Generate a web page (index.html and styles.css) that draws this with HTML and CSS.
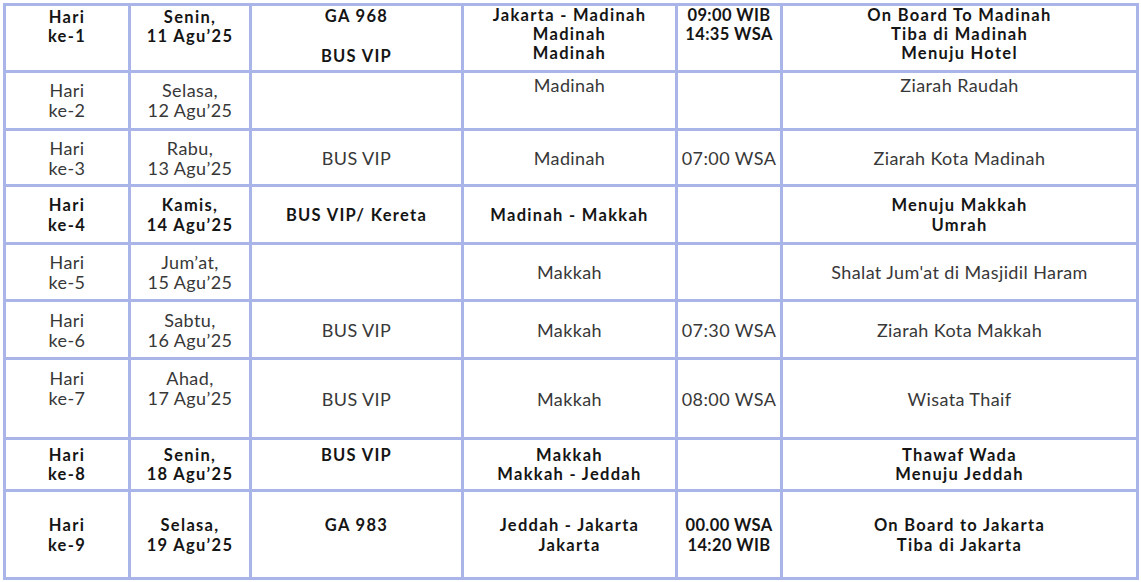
FILE: index.html
```html
<!DOCTYPE html>
<html lang="id">
<head>
<meta charset="utf-8">
<title>Jadwal Perjalanan Umrah</title>
<link rel="stylesheet" href="styles.css">
</head>
<body>
<div class="sched">
  <!-- Row 1 -->
  <div class="c b lh19 top p2">Hari<br>ke-1</div>
  <div class="c b lh19 top p2">Senin,<br>11 Agu’25</div>
  <div class="c b lh19 top p1"><span>GA 968</span><span class="gap">BUS VIP</span></div>
  <div class="c b lh19 top p0">Jakarta - Madinah<br>Madinah<br>Madinah</div>
  <div class="c b lh19 top p0 tight">09:00 WIB<br>14:35 WSA</div>
  <div class="c b lh19 top p0">On Board To Madinah<br>Tiba di Madinah<br>Menuju Hotel</div>
  <!-- Row 2 -->
  <div class="c r top p7">Hari<br>ke-2</div>
  <div class="c r top p7">Selasa,<br>12 Agu’25</div>
  <div class="c r"></div>
  <div class="c r top p2">Madinah</div>
  <div class="c r"></div>
  <div class="c r top p2">Ziarah Raudah</div>
  <!-- Row 3 -->
  <div class="c r">Hari<br>ke-3</div>
  <div class="c r">Rabu,<br>13 Agu’25</div>
  <div class="c r">BUS VIP</div>
  <div class="c r">Madinah</div>
  <div class="c r">07:00 WSA</div>
  <div class="c r">Ziarah Kota Madinah</div>
  <!-- Row 4 -->
  <div class="c b">Hari<br>ke-4</div>
  <div class="c b">Kamis,<br>14 Agu’25</div>
  <div class="c b">BUS VIP/ Kereta</div>
  <div class="c b">Madinah - Makkah</div>
  <div class="c b"></div>
  <div class="c b">Menuju Makkah<br>Umrah</div>
  <!-- Row 5 -->
  <div class="c r">Hari<br>ke-5</div>
  <div class="c r">Jum’at,<br>15 Agu’25</div>
  <div class="c r"></div>
  <div class="c r">Makkah</div>
  <div class="c r"></div>
  <div class="c r">Shalat Jum'at di Masjidil Haram</div>
  <!-- Row 6 -->
  <div class="c r">Hari<br>ke-6</div>
  <div class="c r">Sabtu,<br>16 Agu’25</div>
  <div class="c r">BUS VIP</div>
  <div class="c r">Makkah</div>
  <div class="c r">07:30 WSA</div>
  <div class="c r">Ziarah Kota Makkah</div>
  <!-- Row 7 -->
  <div class="c r top p8">Hari<br>ke-7</div>
  <div class="c r top p8">Ahad,<br>17 Agu’25</div>
  <div class="c r">BUS VIP</div>
  <div class="c r">Makkah</div>
  <div class="c r">08:00 WSA</div>
  <div class="c r">Wisata Thaif</div>
  <!-- Row 8 -->
  <div class="c b lh19">Hari<br>ke-8</div>
  <div class="c b lh19">Senin,<br>18 Agu’25</div>
  <div class="c b lh19">BUS VIP<br>&nbsp;</div>
  <div class="c b lh19">Makkah<br>Makkah - Jeddah</div>
  <div class="c b lh19"></div>
  <div class="c b lh19">Thawaf Wada<br>Menuju Jeddah</div>
  <!-- Row 9 -->
  <div class="c b">Hari<br>ke-9</div>
  <div class="c b">Selasa,<br>19 Agu’25</div>
  <div class="c b">GA 983<br>&nbsp;</div>
  <div class="c b">Jeddah - Jakarta<br>Jakarta</div>
  <div class="c b tight">00.00 WSA<br>14:20 WIB</div>
  <div class="c b">On Board to Jakarta<br>Tiba di Jakarta</div>
</div>
</body>
</html>
```
FILE: styles.css
```css
html, body {
  margin: 0;
  padding: 0;
  background: #ffffff;
}

body {
  font-family: "Lato", "Liberation Sans", sans-serif;
}

.sched {
  display: grid;
  grid-template-columns: 122px 118px 209px 211px 102px 353px;
  grid-template-rows: 64px 55px 53px 55px 54px 55px 77px 49px 85px;
  gap: 3px;
  padding: 3px;
  margin: 3px 0 0 3px;
  width: max-content;
  background: #a9b4e9;
}

.c {
  background: #ffffff;
  display: flex;
  flex-direction: column;
  justify-content: center;
  align-items: center;
  text-align: center;
  white-space: nowrap;
}

.b {
  font-size: 16.5px;
  font-weight: 700;
  letter-spacing: 1.3px;
  color: #151515;
  line-height: 20px;
}

.r {
  font-size: 18px;
  font-weight: 400;
  letter-spacing: 0.4px;
  color: #383838;
  line-height: 20px;
}

.lh19 { line-height: 19px; }

.top { justify-content: flex-start; }
.p0 { padding-top: 0; }
.p1 { padding-top: 1px; }
.p2 { padding-top: 2px; }
.p7 { padding-top: 7px; }
.p8 { padding-top: 8px; }

.gap { margin-top: 21px; }

.tight { letter-spacing: 0.4px; }
```
